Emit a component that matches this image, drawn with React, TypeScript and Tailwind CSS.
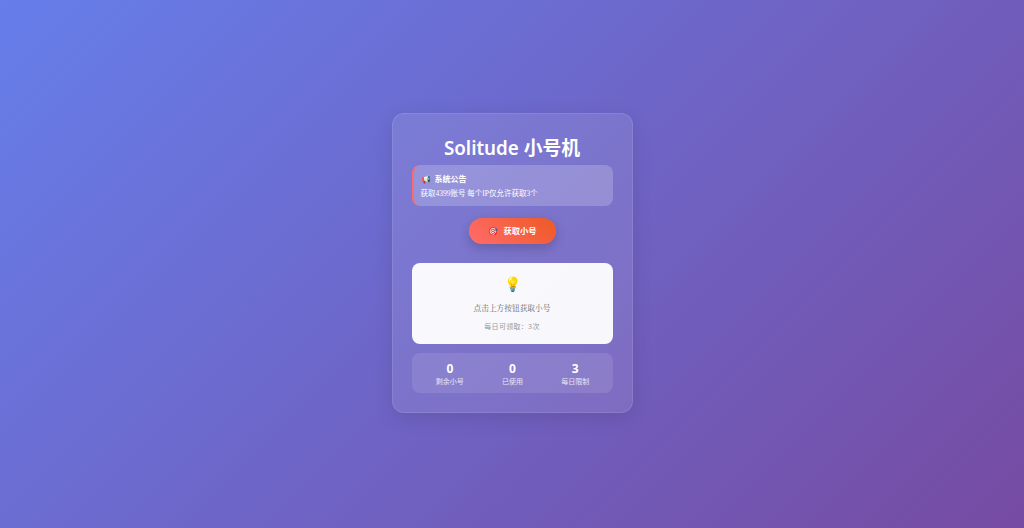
export default function App() {
  const sans = "font-['Noto_Sans','Noto_Sans_CJK_SC',sans-serif]";
  return (
    <div className={`flex h-[528px] w-full items-center justify-center bg-[linear-gradient(135deg,#667eea_0%,#764ba2_100%)] pb-[2px] ${sans}`}>
      <div className="flex h-[300px] w-[241px] flex-col rounded-[12px] border border-white/10 bg-white/10 px-[19px] pt-[20px] shadow-[0_5px_20px_rgba(0,0,0,0.1)]">
        <h1 className="h-[31px] text-center text-[18.8px] leading-[28px] font-semibold whitespace-nowrap text-white">Solitude 小号机</h1>
        <div className="h-[41px] rounded-[8px] border-l-2 border-[#ff6b6b] bg-white/20 pt-[7px] pl-[7px] text-white">
          <div className="flex h-[14px] items-center text-[8px] leading-[14px] font-bold">
            <span className="w-[14px] text-[8px]">📢</span>
            <span>系统公告</span>
          </div>
          <p className="mt-[1px] text-[7.5px] leading-[14px] font-['Liberation_Serif','Noto_Sans_CJK_SC',serif] whitespace-nowrap">获取4399账号 每个IP仅允许获取3个</p>
        </div>
        <button className="mx-auto mt-[12px] flex h-[26px] w-[87px] items-center justify-center gap-[5px] rounded-full bg-[linear-gradient(45deg,#ff6b6b,#ee5a24)] pl-[1px] text-[8.3px] font-semibold text-white shadow-[0_4px_12px_rgba(0,0,0,0.2)]">
          <span className="text-[8px]">🎯</span>
          <span>获取小号</span>
        </button>
        <div className="mt-[19px] flex h-[81px] flex-col items-center rounded-[8px] bg-white/95 pt-[12px] text-center">
          <div className="h-[18px] text-[14px] leading-[18px]">💡</div>
          <p className="mt-[10px] text-[7.7px] leading-[12px] text-[#666] font-['Liberation_Serif','Noto_Serif_CJK_SC','Noto_Sans_CJK_SC',serif]">点击上方按钮获取小号</p>
          <p className="mt-[7px] text-[7px] leading-[10px] tracking-[0.3px] text-[#999]">每日可领取：3次</p>
        </div>
        <div className="mt-[9px] grid h-[40px] grid-cols-3 rounded-[8px] bg-white/10 pt-[9px] pr-[6px] pl-[7px] text-center text-white">
          {[["0","剩余小号"],["0","已使用"],["3","每日限制"]].map(([n,l],i)=>(
            <div key={i} className="flex flex-col items-center">
              <div className="h-[14px] text-[12px] leading-[14px] font-bold font-['Noto_Sans',sans-serif]">{n}</div>
              <div className="mt-[1px] text-[7px] leading-[10px] text-white/80">{l}</div>
            </div>
          ))}
        </div>
      </div>
    </div>
  );
}
